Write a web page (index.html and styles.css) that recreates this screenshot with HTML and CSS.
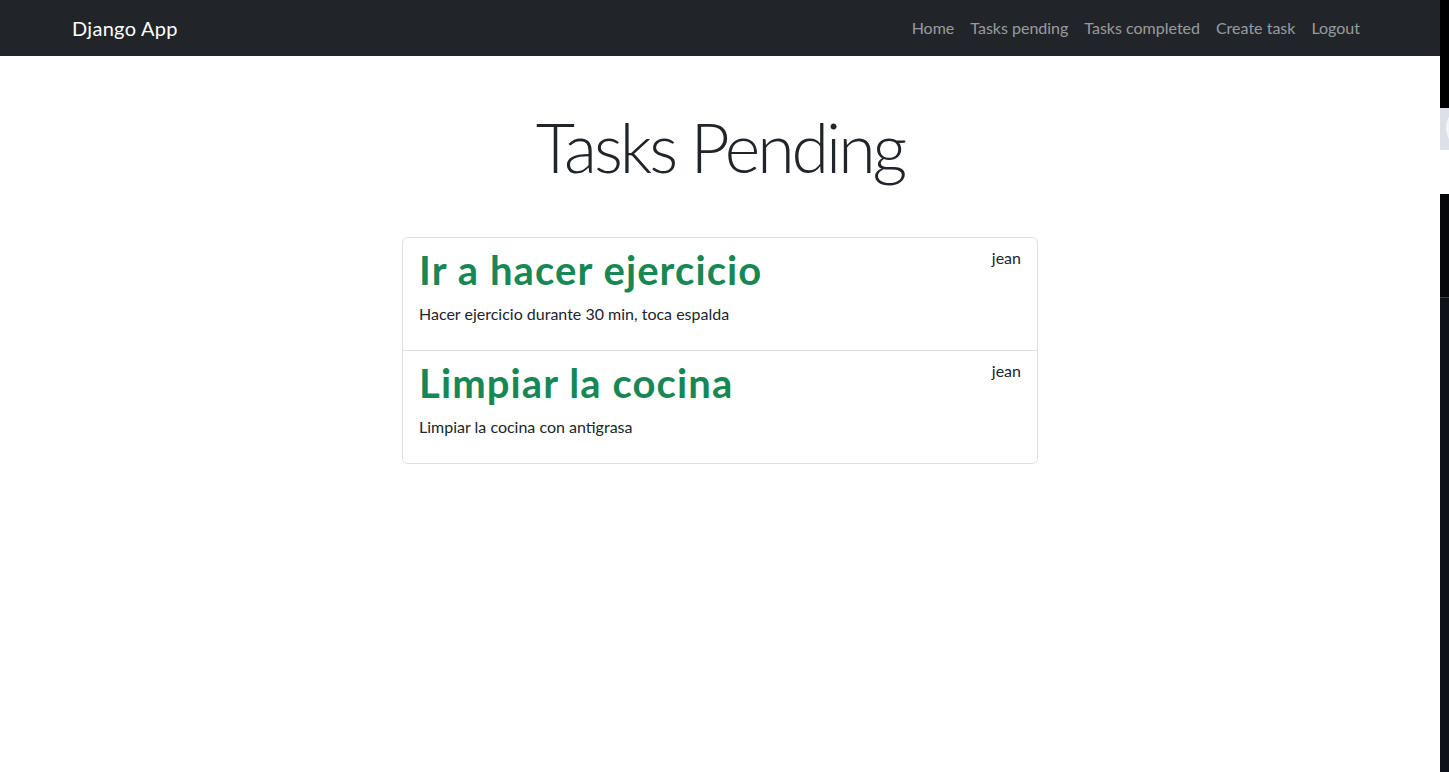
FILE: index.html
```html
<!DOCTYPE html>
<html lang="es">
<head>
<meta charset="utf-8">
<title>Django App</title>
<link rel="stylesheet" href="styles.css">
</head>
<body>
<div class="shell">
  <div class="page">
    <nav class="navbar">
      <div class="container nav-inner">
        <a class="brand" href="#">Django App</a>
        <ul class="nav-links">
          <li><a href="#">Home</a></li>
          <li><a href="#">Tasks pending</a></li>
          <li><a href="#">Tasks completed</a></li>
          <li><a href="#">Create task</a></li>
          <li><a href="#">Logout</a></li>
        </ul>
      </div>
    </nav>
    <main class="container">
      <h1 class="display">Tasks Pending</h1>
      <ul class="list-group">
        <li class="list-item">
          <header class="item-head">
            <h1 class="item-title">Ir a hacer ejercicio</h1>
            <p class="item-user">jean</p>
          </header>
          <p class="item-desc">Hacer ejercicio durante 30 min, toca espalda</p>
        </li>
        <li class="list-item">
          <header class="item-head">
            <h1 class="item-title">Limpiar la cocina</h1>
            <p class="item-user">jean</p>
          </header>
          <p class="item-desc">Limpiar la cocina con antigrasa</p>
        </li>
      </ul>
    </main>
  </div>
  <aside class="edge">
    <div class="edge-top"></div>
    <div class="edge-light"><span class="edge-knob"></span></div>
    <div class="edge-white"></div>
    <div class="edge-dark"></div>
    <div class="edge-bottom"></div>
  </aside>
</div>
</body>
</html>
```
FILE: styles.css
```css
* { box-sizing: border-box; }
html, body { margin: 0; padding: 0; }
body {
  font-family: "Segoe UI", Lato, "Liberation Sans", sans-serif;
  font-size: 16px;
  line-height: 1.5;
  color: #212529;
  background: #fff;
}
.shell { display: flex; min-height: 772px; }
.page { flex: 1; min-width: 0; }
.container {
  width: 100%;
  max-width: 1320px;
  margin: 0 auto;
  padding: 0 12px;
}
.navbar { background: #212529; height: 56px; }
.nav-inner {
  display: flex;
  align-items: center;
  justify-content: space-between;
  height: 56px;
}
.brand {
  color: #fff;
  text-decoration: none;
  font-size: 20px;
  line-height: 30px;
  padding: 5px 0;
  letter-spacing: 0.3px;
}
.nav-links {
  display: flex;
  list-style: none;
  margin: 0;
  padding: 0;
}
.nav-links a {
  display: block;
  padding: 8px;
  color: rgba(255,255,255,.55);
  text-decoration: none;
  font-size: 16px;
  line-height: 24px;
}
.display {
  font-size: 68px;
  font-weight: 300;
  line-height: 1.27;
  letter-spacing: -3px;
  text-align: center;
  margin: 48px 0 47px;
}
.list-group {
  list-style: none;
  margin: 0 auto;
  padding: 0;
  width: 636px;
  border: 1px solid #dfdfdf;
  border-radius: 6px;
}
.list-item {
  padding: 8px 16px;
  border-bottom: 1px solid #dfdfdf;
}
.list-item:last-child { border-bottom: 0; }
.item-head {
  display: flex;
  justify-content: space-between;
  align-items: flex-start;
}
.item-title {
  margin: 0 0 8px;
  font-size: 40px;
  line-height: 1.2;
  font-weight: 700;
  letter-spacing: 1.1px;
  color: #198754;
}
.item-user { margin: 0; }
.item-desc { margin: 0 0 16px; }
.edge { width: 9px; display: flex; flex-direction: column; }
.edge-top { height: 108px; background: #000; }
.edge-light { height: 42px; background: #dde0e6; position: relative; overflow: hidden; }
.edge-knob {
  position: absolute; left: 6px; top: 6px;
  width: 16px; height: 28px; border-radius: 50%;
  background: #f4f5f7;
}
.edge-white { height: 44px; background: #fff; }
.edge-dark { height: 104px; background: #05070b; border-bottom: 1px solid #3a3d44; }
.edge-bottom { flex: 1; background: #0f1118; }
```
